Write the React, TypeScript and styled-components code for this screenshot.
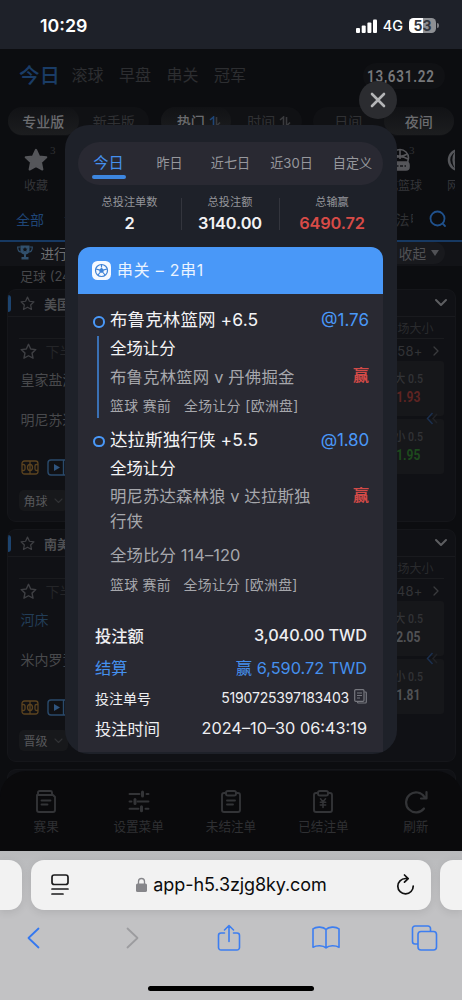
import React from "react";
import styled, { createGlobalStyle } from "styled-components";

const Global = createGlobalStyle`
  * { box-sizing: border-box; }
  body { margin: 0; background: #0c0d10; }
`;

const blue = "#4998f8";

const Screen = styled.div`
  position: relative;
  width: 462px;
  height: 1000px;
  overflow: hidden;
  display: flex;
  flex-direction: column;
  font-family: Inter, "Noto Sans CJK SC", sans-serif;
  white-space: nowrap;
`;

/* ---------- status bar ---------- */
const StatusBar = styled.header`
  height: 49px;
  flex: none;
  background: #1e2129;
  color: #fff;
  display: flex;
  align-items: center;
  justify-content: space-between;
  padding: 2px 26px 0 40px;
`;
const Clock = styled.span`
  font-size: 17.8px;
  font-weight: 600;
`;
const StatusRight = styled.div`
  display: flex;
  align-items: center;
  gap: 6px;
  font-size: 14.4px;
  font-weight: 500;
  svg { display: block; }
`;
const Battery = styled.div`
  position: relative;
  width: 27px;
  height: 15px;
  border-radius: 4.5px;
  background: linear-gradient(90deg, #fff 53%, #8e9094 53%);
  color: #33363d;
  font-size: 14px;
  font-weight: 700;
  line-height: 15px;
  text-align: center;
  &::after {
    content: "";
    position: absolute;
    right: -3px;
    top: 5px;
    width: 2px;
    height: 5px;
    border-radius: 0 2px 2px 0;
    background: #7c7e83;
  }
`;

/* ---------- page under the dialog ---------- */
const Page = styled.main`
  height: 802px;
  flex: none;
  background: #0c0d10;
  display: flex;
  flex-direction: column;
  overflow: hidden;
`;
const TopNav = styled.nav`
  height: 53px;
  flex: none;
  display: flex;
  align-items: center;
  padding: 0 17px 3px 19px;
  gap: 15.5px;
`;
const NavItem = styled.span<{ $on?: boolean }>`
  font-size: ${(p) => (p.$on ? 20.5 : 16)}px;
  font-weight: ${(p) => (p.$on ? 500 : 400)};
  color: ${(p) => (p.$on ? "#1a3c66" : "#2d2e31")};
  margin-right: ${(p) => (p.$on ? -4 : 0)}px;
`;
const Balance = styled.div`
  margin: 3px 0 0 auto;
  width: 82px;
  height: 26px;
  border-radius: 13px;
  background: #101114;
  color: #77787b;
  font: 600 17px/26px Roboto, sans-serif;
  padding-left: 3.5px;
  span { display: inline-block; transform: scaleX(0.79); transform-origin: left; letter-spacing: 1px; }
`;
const FilterRow = styled.div`
  height: 38px;
  flex: none;
  display: flex;
  justify-content: space-between;
  padding: 5px 8px 4px;
`;
const Segments = styled.div`
  width: 141px;
  height: 29px;
  border-radius: 15px;
  background: #101114;
  display: flex;
`;
const Segment = styled.div<{ $on?: boolean }>`
  flex: 1;
  height: 28px;
  border-radius: 14px;
  display: flex;
  align-items: center;
  justify-content: center;
  gap: 4px;
  padding-bottom: 1px;
  font-size: 14px;
  font-weight: ${(p) => (p.$on ? 500 : 400)};
  color: ${(p) => (p.$on ? "#6b6c6f" : "#303134")};
  background: ${(p) => (p.$on ? "linear-gradient(#111215, #1c1d1f)" : "none")};
  svg { margin: 2px -6px 0 0; }
`;
const SportRow = styled.div`
  height: 61px;
  flex: none;
  display: flex;
  justify-content: space-between;
  padding: 8px 7px 0 15px;
`;
const Sport = styled.div<{ $w: number; $clip?: boolean }>`
  width: ${(p) => p.$w}px;
  position: relative;
  display: flex;
  flex-direction: column;
  align-items: ${(p) => (p.$clip ? "flex-start" : "center")};
  overflow: ${(p) => (p.$clip ? "hidden" : "visible")};
  font-size: 12px;
  line-height: 18px;
  color: #343539;
  svg { display: block; margin-bottom: 5px; flex: none; }
`;
const SportGroup = styled.div`
  display: flex;
  gap: 25px;
`;
const Sup = styled.sup`
  position: absolute;
  top: -5px;
  left: 35px;
  font: 11px/14px "Liberation Serif", serif;
  color: #2f3033;
`;
const PlayRow = styled.div`
  height: 40.5px;
  flex: none;
  border-bottom: 2px solid #173962;
  display: flex;
  align-items: center;
  padding: 0 15px 3px 16px;
  font-size: 14px;
  color: #2f3033;
  b { font-weight: 400; color: #1f4576; margin-right: 20px; }
  span { margin-left: auto; margin-right: 16px; width: 17.5px; overflow: hidden; }
`;
const LiveRow = styled.div`
  height: 24.5px;
  flex: none;
  background: #121317;
  display: flex;
  align-items: center;
  padding: 0 17px 2px;
  gap: 7.5px;
  font-size: 13.6px;
  color: #6d6e71;
`;
const Collapse = styled.div`
  margin-left: auto;
  height: 22px;
  width: 64px;
  border-radius: 11px;
  background: #18191d;
  color: #505155;
  display: flex;
  align-items: center;
  justify-content: flex-end;
  gap: 5px;
  padding-right: 6px;
`;
const League = styled.div`
  height: 23px;
  flex: none;
  padding-left: 20px;
  font-size: 13px;
  line-height: 21px;
  color: #47484b;
`;
const Match = styled.section`
  width: 449px;
  height: 233px;
  flex: none;
  margin: 0 0 7px 6.5px;
  border: 1px solid #15161a;
  border-radius: 9px;
  background: #101115;
  overflow: hidden;
`;
const MatchHead = styled.div`
  height: 27px;
  border-bottom: 1px solid #191a1e;
  display: flex;
  align-items: center;
  gap: 9px;
  padding-right: 7px;
  font-size: 13px;
  font-weight: 700;
  color: #4e4f52;
  i { width: 3.5px; height: 17px; background: #1d446f; border-radius: 0 3px 3px 0; }
  svg:last-child { margin-left: auto; }
`;
const MatchBody = styled.div`
  margin: 0 11px;
  height: 205px;
`;
const Caption = styled.div`
  height: 22px;
  line-height: 23px;
  text-align: right;
  padding-right: 10px;
  font-size: 12px;
  color: #2a2b2e;
  border-bottom: 1px solid #1a1b1e;
`;
const MatchMeta = styled.div`
  height: 22px;
  display: flex;
  align-items: center;
  gap: 9px;
  padding: 2px 2px 0 1px;
  font-size: 14px;
  color: #242528;
  em { margin-left: auto; font-style: normal; font-size: 13px; color: #323336; letter-spacing: 0.2px; }
`;
const Grid = styled.div`
  display: flex;
  justify-content: space-between;
  position: relative;
`;
const Teams = styled.div`
  padding: 8px 0 0 2px;
  height: 152px;
  display: flex;
  flex-direction: column;
`;
const Team = styled.div<{ $blue?: boolean }>`
  height: 40px;
  line-height: 22px;
  font-size: 14px;
  color: ${(p) => (p.$blue ? "#223d57" : "#48494c")};
`;
const Badges = styled.div`
  display: flex;
  gap: 8px;
  height: 36px;
  align-items: center;
`;
const Tag = styled.div`
  margin: 5px 0 0 -2px;
  width: 49px;
  height: 21px;
  flex: none;
  border-radius: 5px;
  background: #17181b;
  display: flex;
  align-items: center;
  gap: 6px;
  padding-left: 5px;
  font-size: 12px;
  color: #57585b;
`;
const OddsCol = styled.div`
  display: flex;
  flex-direction: column;
  gap: 3px;
`;
const Odd = styled.div<{ $c: string }>`
  width: 94px;
  height: 55px;
  border-radius: 3px;
  background: #16171a;
  text-align: right;
  padding: 9px 21px 0 0;
  font: 500 12px/18px Roboto, "Noto Sans CJK SC", sans-serif;
  color: #323336;
  strong {
    display: block;
    padding-right: 3px;
    font-size: 14px;
    font-weight: 700;
    line-height: 18px;
    transform: scaleX(0.86);
    transform-origin: right;
    color: ${(p) => p.$c};
  }
  span { display: block; line-height: 18px; transform: scaleX(0.88); transform-origin: right; }
`;
const Swipe = styled.svg`
  position: absolute;
  right: 6px;
  top: 51px;
`;
const BottomNav = styled.nav`
  position: absolute;
  left: 0;
  top: 771px;
  width: 462px;
  height: 80px;
  background: #0a0a0c;
  border-radius: 26px 26px 0 0;
  display: grid;
  grid-template-columns: repeat(5, 1fr);
  padding-top: 18px;
`;
const BottomItem = styled.div`
  display: flex;
  flex-direction: column;
  align-items: center;
  gap: 2.5px;
  font-size: 12.6px;
  line-height: 18px;
  color: #2f3033;
  svg { display: block; }
`;

/* ---------- dialog ---------- */
const Dialog = styled.div`
  position: absolute;
  left: 65px;
  top: 125px;
  width: 332px;
  height: 629px;
  border-radius: 24px;
  background: #1e2129;
  padding: 17px 14px 2px 13px;
  display: flex;
  flex-direction: column;
  overflow: hidden;
`;
const Close = styled.button`
  position: absolute;
  left: 359px;
  top: 81px;
  width: 38px;
  height: 38px;
  border: 0;
  padding: 0;
  border-radius: 50%;
  background: #2b2c30;
  display: grid;
  place-items: center;
`;
const Tabs = styled.div`
  height: 43px;
  flex: none;
  border-radius: 22px;
  background: #292932;
  display: grid;
  grid-template-columns: repeat(5, 61px);
`;
const Tab = styled.div<{ $on?: boolean }>`
  position: relative;
  text-align: center;
  line-height: 42px;
  font-size: ${(p) => (p.$on ? 15.3 : 13.1)}px;
  color: ${(p) => (p.$on ? "#4590ee" : "#97989d")};
  &::after {
    content: "";
    display: ${(p) => (p.$on ? "block" : "none")};
    position: absolute;
    left: 14px;
    top: 32.5px;
    width: 34px;
    height: 4px;
    border-radius: 2px;
    background: #3d86df;
  }
`;
const Stats = styled.div`
  height: 61.5px;
  flex: none;
  display: grid;
  grid-template-columns: 103px 98px 106px;
  padding-top: 8px;
`;
const Stat = styled.div<{ $red?: boolean }>`
  position: relative;
  text-align: center;
  font-size: 11.2px;
  line-height: 18px;
  color: #94959a;
  strong {
    display: block;
    font-size: 16.4px;
    font-weight: 600;
    line-height: 24px;
    letter-spacing: -0.15px;
    color: ${(p) => (p.$red ? "#d84b47" : "#f2f2f4")};
  }
  &:not(:first-child)::before {
    content: "";
    position: absolute;
    left: 0;
    top: 5px;
    height: 32px;
    width: 1px;
    background: #33353d;
  }
`;
const SlipHead = styled.div`
  height: 47px;
  flex: none;
  border-radius: 12px 12px 0 0;
  background: ${blue};
  color: #eaf3ff;
  display: flex;
  align-items: center;
  gap: 6px;
  padding-left: 14px;
  font-size: 15.9px;
  letter-spacing: 0.8px;
  span { padding-bottom: 1px; }
`;
const Slip = styled.div`
  flex: 1;
  background: #292932;
  padding: 12.5px 16px 0 15px;
`;
const Leg = styled.div<{ $h: number }>`
  height: ${(p) => p.$h}px;
  display: grid;
  grid-template-columns: 17px 1fr auto;
`;
const Rail = styled.div`
  display: flex;
  flex-direction: column;
  padding-top: 10px;
  i { width: 11.5px; height: 11.5px; border: 2.5px solid ${blue}; border-radius: 50%; }
  b { width: 2px; height: 82px; margin: 8.5px 0 0 4px; background: #3a70b4; }
`;
const Line = styled.div<{ $h: number; $s: number; $c?: string; $ls?: number; $w?: number }>`
  height: ${(p) => p.$h}px;
  line-height: ${(p) => p.$h}px;
  font-size: ${(p) => p.$s}px;
  color: ${(p) => p.$c || "#f4f4f6"};
  letter-spacing: ${(p) => p.$ls || 0}px;
  font-weight: ${(p) => p.$w || 400};
  white-space: pre;
`;
const Result = styled.div`
  display: flex;
  flex-direction: column;
  align-items: flex-end;
  margin-right: -2px;
`;
const Sum = styled.div<{ $h: number; $c?: string }>`
  height: ${(p) => p.$h}px;
  color: ${(p) => p.$c || "#eeeef1"};
  display: flex;
  align-items: center;
  justify-content: space-between;
  padding-left: 2px;
`;
const Words = styled.span<{ $s: number; $w?: number; $ls?: number }>`
  font-size: ${(p) => p.$s}px;
  font-weight: ${(p) => p.$w || 400};
  letter-spacing: ${(p) => p.$ls || 0}px;
  display: inline-flex;
  align-items: center;
  gap: 5px;
  svg { margin-top: -3px; }
`;

/* ---------- browser chrome ---------- */
const Browser = styled.footer`
  height: 149px;
  flex: none;
  background: linear-gradient(#b9babc, #c2c2c4 30%);
  display: flex;
  flex-direction: column;
  position: relative;
`;
const UrlRow = styled.div`
  display: flex;
  justify-content: space-between;
  padding-top: 8.5px;
`;
const SideCard = styled.div<{ $left?: boolean }>`
  width: 22px;
  height: 50px;
  background: #f2f2f2;
  border-radius: ${(p) => (p.$left ? "0 13px 13px 0" : "13px 0 0 13px")};
  box-shadow: 0 2px 8px rgba(0, 0, 0, 0.1);
`;
const UrlCard = styled.div`
  width: 400px;
  height: 50px;
  border-radius: 13px;
  background: #f2f2f2;
  box-shadow: 0 2px 8px rgba(0, 0, 0, 0.1);
  display: flex;
  align-items: center;
  justify-content: space-between;
  padding: 0 16px 0 20px;
  color: #0b0b0c;
`;
const Url = styled.div`
  display: flex;
  align-items: center;
  gap: 6px;
  font-size: 18px;
  letter-spacing: -0.1px;
  margin-right: 2px;
`;
const Tools = styled.div`
  height: 54px;
  display: flex;
  align-items: center;
  justify-content: space-between;
  padding: 2px 24px 0 19px;
`;
const Tool = styled.div<{ $dx?: number }>`
  width: 28px;
  display: flex;
  justify-content: center;
  padding-left: ${(p) => p.$dx || 0}px;
`;
const HomeBar = styled.div`
  width: 166px;
  height: 5.5px;
  border-radius: 3px;
  background: #000;
  margin: 22px auto 0;
`;

const Star = ({ size, fill, stroke }: { size: number; fill?: string; stroke?: string }) => (
  <svg width={size} height={size} viewBox="0 0 24 24" fill={fill || "none"} stroke={stroke || fill} strokeWidth="2" strokeLinejoin="round">
    <path d="M12 1.8l3.1 6.6 7.2.9-5.3 5 1.4 7.2L12 18l-6.4 3.5L7 14.300l-5.300-5 7.200-.9z" />
  </svg>
);
const Sort = ({ on }: { on?: boolean }) => (
  <svg width="12" height="11" viewBox="0 0 12 11" fill="none" strokeWidth="1.6">
    <path d="M1 4L4.500 1V10" stroke={on ? "#1f4678" : "#3a3b3e"} />
    <path d="M7.500 1v9L11 6.500" stroke="#3a3b3e" />
  </svg>
);
const Chevron = ({ w, h, d, c, s = 2 }: { w: number; h: number; d: string; c: string; s?: number }) => (
  <svg width={w} height={h} viewBox={`0 0 ${w} ${h}`} fill="none" stroke={c} strokeWidth={s} strokeLinecap="round" strokeLinejoin="round">
    <path d={d} />
  </svg>
);

type MatchProps = {
  league: string;
  home: string;
  homeBlue?: boolean;
  away: string;
  more: string;
  tag: string;
  odds: [string, string, string][];
};
const MatchCard = ({ league, home, homeBlue, away, more, tag, odds }: MatchProps) => (
  <Match>
    <MatchHead>
      <i />
      <Star size={15} stroke="#3e3f43" />
      <span>{league}</span>
      <Chevron w={14} h={10} d="M2 2l5 5 5-5" c="#5d5e61" />
    </MatchHead>
    <MatchBody>
      <Caption>全场大小</Caption>
      <MatchMeta>
        <Star size={17} stroke="#3e3f43" />
        <span>下半场</span>
        <em>{more}</em>
        <Chevron w={10} h={10} d="M2 1l4 4-4 4" c="#3a3b3e" s={1.3} />
      </MatchMeta>
      <Grid>
        <Teams>
          <Team $blue={homeBlue}>{home}</Team>
          <Team>{away}</Team>
          <Badges>
            <svg width="18" height="15" viewBox="0 0 18 15" fill="none" stroke="#5b431f" strokeWidth="1.3">
              <rect x="1" y="1" width="16" height="13" rx="2.500" />
              <path d="M9 1v13M1 4.500h1.500a1.500 1.500 0 0 1 1.500 1.500v3a1.500 1.500 0 0 1-1.500 1.500H1M17 4.500h-1.500a1.500 1.500 0 0 0-1.500 1.500v3a1.500 1.500 0 0 0 1.500 1.500H17" />
              <ellipse cx="9" cy="7.500" rx="2.500" ry="3" />
            </svg>
            <svg width="22" height="17" viewBox="0 0 22 17" fill="none" stroke="#2a4a6b" strokeWidth="1.400">
              <rect x="1" y="1" width="20" height="15" rx="3" />
              <path d="M16.500 1v15M18 5h3M18 8.500h3M18 12h3" />
              <path d="M7 5v7l6-3.500z" fill="#2f5580" stroke="none" />
            </svg>
          </Badges>
          <Tag>
            {tag}
            <Chevron w={9} h={6} d="M1 1l3.500 3.500L8 1" c="#303134" s={1.1} />
          </Tag>
        </Teams>
        <OddsCol>
          {odds.map(([k, v, c]) => (
            <Odd key={k} $c={c}>
              <span>{k}</span>
              <strong>{v}</strong>
            </Odd>
          ))}
        </OddsCol>
        <Swipe width="12" height="13" viewBox="0 0 12 13" fill="none" strokeWidth="1.500">
          <path d="M6.500 1l-5 5.500 5 5.500" stroke="#1b2f4e" />
          <path d="M11 2l-4 4.500 4 4.500" stroke="#202226" />
        </Swipe>
      </Grid>
    </MatchBody>
  </Match>
);

const iconProps = { width: 24, height: 26, viewBox: "0 0 24 26", fill: "none", stroke: "#333437", strokeWidth: 1.9, strokeLinecap: "round" as const, strokeLinejoin: "round" as const };
const clip = "M7 4H5a2 2 0 0 0-2 2v15a2 2 0 0 0 2 2h14a2 2 0 0 0 2-2V6a2 2 0 0 0-2-2H17";
const bottom: [string, React.ReactNode][] = [
  ["赛果", <svg {...iconProps}><path d="M4 6V3.500a1.500 1.500 0 0 1 1.500-1.500h11A1.500 1.500 0 0 1 18 3.500V6M3 6h16l2 2v13a2 2 0 0 1-2 2H5a2 2 0 0 1-2-2zM7.500 11.500h9M7.500 15.500h6" /></svg>],
  ["设置菜单", <svg {...iconProps}><path d="M2.500 5h10M19.500 5h2M2.500 12.500h2M10.500 12.500h11M2.500 19.800h9M18.500 19.800h3" /><path d="M15.500 3v4M8 10.500v4M14.500 17.800v4" strokeWidth="3" /></svg>],
  ["未结注单", <svg {...iconProps}><path d={clip} /><rect x="7" y="2" width="10" height="4.500" rx="1.800" /><path d="M8 11.500h8M8 15.500h6" /></svg>],
  ["已结注单", <svg {...iconProps}><path d={clip} /><rect x="7" y="2" width="10" height="4.500" rx="1.800" /><path d="M9.500 9.800l2.500 3 2.500-3M12 13v5.500M9.300 13.300h5.400M9.300 16h5.400" strokeWidth="1.600" /></svg>],
  ["刷新", <svg {...iconProps} strokeWidth={2.2}><path d="M20 19.500A10 10 0 1 1 20.500 8M22.500 3v6.500h-5.500" /></svg>],
];

export default function App() {
  return (
    <Screen>
      <Global />
      <StatusBar>
        <Clock>10:29</Clock>
        <StatusRight>
          <svg width="21" height="14" viewBox="0 0 21 14" fill="#fff">
            <rect x="0" y="9" width="4" height="5" rx="1" />
            <rect x="5.700" y="6.500" width="4" height="7.500" rx="1" />
            <rect x="11.400" y="3.500" width="4" height="10.500" rx="1" />
            <rect x="17" y="0.500" width="4" height="13.500" rx="1" />
          </svg>
          <span>4G</span>
          <Battery>53</Battery>
        </StatusRight>
      </StatusBar>

      <Page>
        <TopNav>
          <NavItem $on>今日</NavItem>
          <NavItem>滚球</NavItem>
          <NavItem>早盘</NavItem>
          <NavItem>串关</NavItem>
          <NavItem>冠军</NavItem>
          <Balance><span>13,631.22</span></Balance>
        </TopNav>
        <FilterRow>
          <Segments><Segment $on>专业版</Segment><Segment>新手版</Segment></Segments>
          <Segments><Segment $on>热门<Sort on /></Segment><Segment>时间<Sort /></Segment></Segments>
          <Segments><Segment>日间</Segment><Segment $on>夜间</Segment></Segments>
        </FilterRow>
        <SportRow>
          <Sport $w={42}><Star size={24} fill="#55565a" /><Sup>3</Sup>收藏</Sport>
          <SportGroup>
            <Sport $w={48}>
              <svg width="28" height="24" viewBox="0 0 28 24" fill="none" stroke="#55565a" strokeWidth="1.600">
                <circle cx="16" cy="10" r="8.500" />
                <path d="M8.500 6c5 3 10 3 15 0M16 1v10M8 11c5-3 11-3 16 0" />
                <rect x="4" y="14" width="21" height="8" rx="3" fill="#55565a" />
                <path d="M7 18h15" stroke="#15161a" strokeDasharray="3 1.500" />
              </svg>
              <Sup>3</Sup>美式篮球
            </Sport>
            <Sport $w={8} $clip>
              <svg width="24" height="24" viewBox="0 0 24 24" fill="none" stroke="#55565a" strokeWidth="2.500">
                <circle cx="12" cy="12" r="10" />
                <path d="M9 4c-3 5-3 11 0 16" />
              </svg>
              网
            </Sport>
          </SportGroup>
        </SportRow>
        <PlayRow>
          <b>全部</b>世界杯
          <span>法甲</span>
          <svg width="18" height="18" viewBox="0 0 18 18" fill="none" stroke="#20518c" strokeWidth="1.800" strokeLinecap="round">
            <circle cx="8.500" cy="8.500" r="7" /><path d="M13.700 13.700L16 16" />
          </svg>
        </PlayRow>
        <LiveRow>
          <svg width="16" height="15" viewBox="0 0 16 15" fill="#31506d">
            <path d="M3.500.5h9v5c0 2.500-2 4-4.500 4s-4.500-1.500-4.500-4zM7 9h2v3H7zM4.500 12h7v2.500h-7z" />
            <path d="M3.500 2H.7c0 3 1 5 3.300 5M12.500 2h2.800c0 3-1 5-3.300 5" fill="none" stroke="#31506d" strokeWidth="1.200" />
            <path d="M8 2l.8 1.600 1.700.2-1.300 1.100.4 1.700L8 5.700l-1.600.9.400-1.700-1.300-1.100 1.700-.2z" fill="#111216" />
          </svg>
          进行中
          <Collapse>收起
            <svg width="8" height="6" viewBox="0 0 8 6" fill="#505155"><path d="M0 0h8L4 6z" /></svg>
          </Collapse>
        </LiveRow>
        <League>足球 (24)</League>
        <MatchCard league="美国职业" home="皇家盐湖城" away="明尼苏达" more="58+" tag="角球" odds={[["大 0.5", "1.93", "#5e2422"], ["小 0.5", "1.95", "#1d4a1d"]]} />
        <MatchCard league="南美解放" home="河床" homeBlue away="米内罗竞技" more="48+" tag="晋级" odds={[["大 0.5", "2.05", "#505154"], ["小 0.5", "1.81", "#505154"]]} />
        <Match />
      </Page>

      <BottomNav>
        {bottom.map(([label, icon]) => (
          <BottomItem key={label}>{icon}{label}</BottomItem>
        ))}
      </BottomNav>

      <Close aria-label="close">
        <Chevron w={18} h={18} d="M3 3l12 12M15 3L3 15" c="#b4b5b7" s={2.6} />
      </Close>
      <Dialog>
        <Tabs>
          <Tab $on>今日</Tab>
          <Tab>昨日</Tab>
          <Tab>近七日</Tab>
          <Tab>近30日</Tab>
          <Tab>自定义</Tab>
        </Tabs>
        <Stats>
          <Stat>总投注单数<strong>2</strong></Stat>
          <Stat>总投注额<strong>3140.00</strong></Stat>
          <Stat $red>总输赢<strong>6490.72</strong></Stat>
        </Stats>
        <SlipHead>
          <svg width="19" height="19" viewBox="0 0 19 19">
            <rect width="19" height="19" rx="5.500" fill="#f5f9ff" />
            <circle cx="9.500" cy="9.500" r="6" fill="none" stroke="#3d82d6" strokeWidth="1.200" />
            <path d="M9.500 6.800l2.600 1.900-1 3H7.900l-1-3z" fill="#3d82d6" />
            <path d="M9.500 3.500v3M15 8l-3 .8M13 14l-2-2.500M6 14l2-2.500M4 8l3 .8" stroke="#3d82d6" strokeWidth="1.200" />
          </svg>
          <span>串关 – 2串1</span>
        </SlipHead>
        <Slip>
          <Leg $h={119.5}>
            <Rail><i /><b /></Rail>
            <div>
              <Line $h={28} $s={17.5} $ls={0.1}>布鲁克林篮网 +6.5</Line>
              <Line $h={29} $s={16.4}>全场让分</Line>
              <Line $h={29} $s={16.4} $c="#a6a7ac" $ls={0.17}>布鲁克林篮网 v 丹佛掘金</Line>
              <Line $h={29} $s={13.8} $c="#a6a7ac" $ls={0.42}>篮球 赛前   全场让分 [欧洲盘]</Line>
            </div>
            <Result>
              <Line $h={28} $s={17} $c={blue}>@1.76</Line>
              <Line $h={29} $s={16}> </Line>
              <Line $h={25} $s={16} $c="#d24a47" $w={700}>赢</Line>
            </Result>
          </Leg>
          <Leg $h={182.5}>
            <Rail><i /></Rail>
            <div>
              <Line $h={28} $s={17.5} $ls={0.1}>达拉斯独行侠 +5.5</Line>
              <Line $h={28} $s={16.4}>全场让分</Line>
              <Line $h={28} $s={16.4} $c="#a6a7ac" $ls={0.12}>明尼苏达森林狼 v 达拉斯独</Line>
              <Line $h={23} $s={16.4} $c="#a6a7ac">行侠</Line>
              <Line $h={44} $s={16.4} $c="#a6a7ac" $ls={0.1}>全场比分 114–120</Line>
              <Line $h={16} $s={13.8} $c="#a6a7ac" $ls={0.36}>篮球 赛前   全场让分 [欧洲盘]</Line>
            </div>
            <Result>
              <Line $h={28} $s={17} $c={blue} $ls={-0.15}>@1.80</Line>
              <Line $h={29} $s={16}> </Line>
              <Line $h={25} $s={16} $c="#d24a47" $w={700}>赢</Line>
            </Result>
          </Leg>
          <div>
            <Sum $h={54}>
              <Words $s={16.3} $w={500}>投注额</Words>
              <Words $s={16.3} $w={500} $ls={-0.1}>3,040.00 TWD</Words>
            </Sum>
            <Sum $h={9} $c="#4590ee">
              <Words $s={16.3}>结算</Words>
              <Words $s={16.3}>赢 6,590.72 TWD</Words>
            </Sum>
            <Sum $h={53}>
              <Words $s={14}>投注单号</Words>
              <Words $s={14} $ls={-0.2}>
                5190725397183403
                <svg width="13" height="15" viewBox="0 0 13 15" fill="none" stroke="#77787f" strokeWidth="1.200">
                  <path d="M10.500 3H11.500a.8.8 0 0 1 .8.8V13a1 1 0 0 1-1 1H4.500a1 1 0 0 1-1-1v-.5" />
                  <rect x=".7" y=".7" width="9.300" height="11.600" rx="1" />
                  <path d="M3 4h5M3 6.500h5M3 9h3" />
                </svg>
              </Words>
            </Sum>
            <Sum $h={7}>
              <Words $s={16.3}>投注时间</Words>
              <Words $s={16.3}>2024–10–30 06:43:19</Words>
            </Sum>
          </div>
        </Slip>
      </Dialog>

      <Browser>
        <UrlRow>
          <SideCard $left />
          <UrlCard>
            <svg width="18" height="21" viewBox="0 0 18 21" fill="none" stroke="#1b1b1c" strokeWidth="1.700" strokeLinecap="round">
              <rect x="1" y="1" width="16" height="9.500" rx="2.300" />
              <path d="M1 15h16M1 20h11" />
            </svg>
            <Url>
              <svg width="11" height="15" viewBox="0 0 11 15">
                <path d="M2.500 7V4.500a3 3 0 0 1 6 0V7" fill="none" stroke="#86868a" strokeWidth="1.300" />
                <rect y="6.500" width="11" height="8.500" rx="1.600" fill="#86868a" />
              </svg>
              app-h5.3zjg8ky.com
            </Url>
            <svg width="19" height="21" viewBox="0 0 19 21" fill="none" stroke="#111" strokeWidth="1.700" strokeLinecap="round" strokeLinejoin="round">
              <path d="M11.500 4.500H9.500A7.700 7.700 0 1 0 17.200 12M8.500 1l3.700 3.600L8.500 8.200" />
            </svg>
          </UrlCard>
          <SideCard />
        </UrlRow>
        <Tools>
          <Tool><Chevron w={13} h={22} d="M11.500 1.500L1.500 11l10 9.500" c="#3478f0" s={1.8} /></Tool>
          <Tool $dx={4}><Chevron w={13} h={22} d="M1.500 1.500l10 9.500-10 9.500" c="#9c9c9f" s={1.8} /></Tool>
          <Tool>
            <svg width="24" height="28" viewBox="0 0 24 28" fill="none" stroke="#3d7ef0" strokeWidth="1.600" strokeLinecap="round" strokeLinejoin="round">
              <path d="M7.500 9H4a2.500 2.500 0 0 0-2.500 2.500v12A2.500 2.500 0 0 0 4 26h16a2.500 2.500 0 0 0 2.500-2.500v-12A2.500 2.500 0 0 0 20 9h-3.500M12 17.500V1.500M7.500 6L12 1.500 16.500 6" />
            </svg>
          </Tool>
          <Tool>
            <svg width="28" height="23" viewBox="0 0 28 23" fill="none" stroke="#3d7ef0" strokeWidth="1.600" strokeLinejoin="round">
              <path d="M14 3.500C11.500.7 4.500.3 1 2.800v18.500c3.500-2.200 10-2.200 13 .5 3-2.700 9.500-2.700 13-.5V2.800C23.500.3 16.500.7 14 3.500zM14 3.500v18" />
            </svg>
          </Tool>
          <Tool>
            <svg width="27" height="26" viewBox="0 0 27 26" fill="none" stroke="#3d7ef0" strokeWidth="1.600" strokeLinejoin="round">
              <path d="M7 19H4a2.500 2.500 0 0 1-2.500-2.500v-13A2.500 2.500 0 0 1 4 1h13a2.500 2.500 0 0 1 2.500 2.500V6.500" />
              <rect x="7" y="6.500" width="18.500" height="18.500" rx="3" />
            </svg>
          </Tool>
        </Tools>
        <HomeBar />
      </Browser>
    </Screen>
  );
}
